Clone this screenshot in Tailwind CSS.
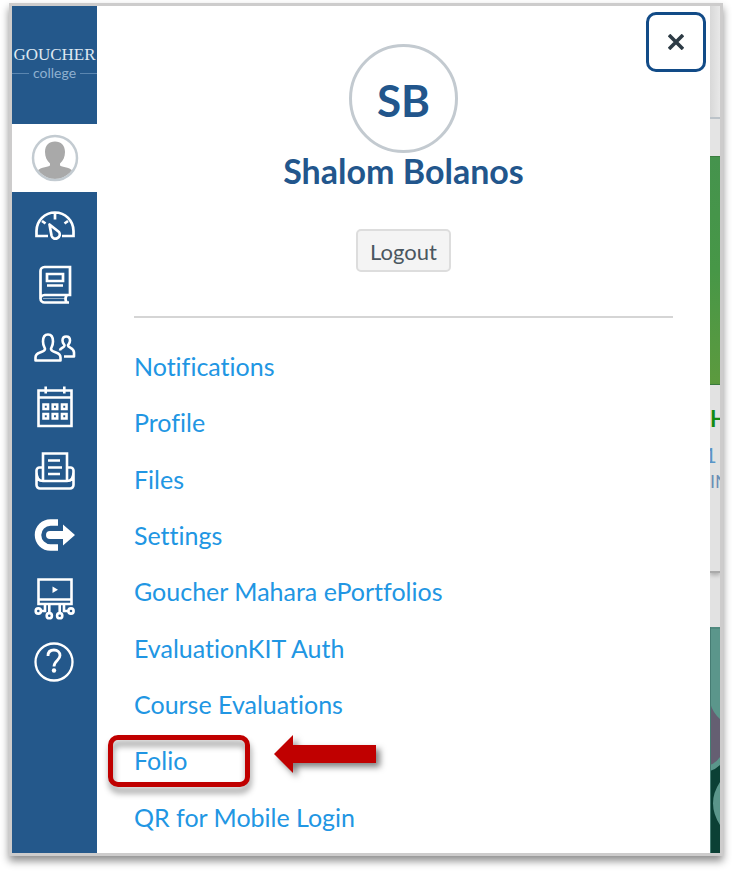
<!DOCTYPE html>
<html lang="en">
    <head>
        <meta charset="utf-8">
        <meta name="viewport" content="width=device-width, initial-scale=1">
        <title>Account</title>
        <script src="https://cdn.jsdelivr.net/npm/@tailwindcss/browser@4"></script>
    </head>
    <body class="flex min-h-screen bg-white px-[9px] pt-[3px] pb-4 font-['Lato',sans-serif]">

    <div class="flex flex-1 border-3 border-[#cdcccc] shadow-[0_5px_8px_rgba(0,0,0,0.45)]">

        <!-- Global navigation -->
        <nav class="flex w-[85px] shrink-0 flex-col bg-[#24588b] text-white">
            <a href="#" class="flex h-[118px] flex-col items-center justify-center overflow-hidden pb-1">
                <span class="font-['Liberation_Serif',serif] text-[17px] leading-5 text-[#dfe8f1]">GOUCHER</span>
                <span class="flex w-full items-center gap-1 text-sm leading-4 text-[#8fb0d0]">
                    <span class="h-px flex-1 bg-[#5b86b0]"></span>college<span class="h-px flex-1 bg-[#5b86b0]"></span>
                </span>
            </a>
            <a href="#" aria-label="Account" class="mb-[3px] flex h-[68px] items-center justify-center bg-white">
                <svg class="size-12" viewBox="0 0 48 48">
                    <clipPath id="face"><circle cx="24" cy="24" r="21"/></clipPath>
                    <g clip-path="url(#face)" fill="#a9a9a9">
                        <path d="M24 7.500c6 0 10 4 10 10.500 0 5-2 9-5 11.500v2c3 2.500 12 1 14 8v8H5v-8c2-7 11-5.500 14-8v-2c-3-2.500-5-6.500-5-11.500C14 11.500 18 7.500 24 7.500z"/>
                    </g>
                    <circle cx="24" cy="24" r="22" fill="none" stroke="#c3cbd1" stroke-width="2.500"/>
                </svg>
            </a>
            <a href="#" aria-label="Dashboard" class="flex h-[62px] justify-center">
                <svg class="h-[62px] w-[49px]" viewBox="0 0 49 62" fill="none" stroke="currentColor" stroke-width="2.700">
                    <path d="M18 41H6.500V36a18.500 18.500 0 0 1 37 0v5H32M25 18v6.500M12 26l3.500 2.500M38 26l-3.500 2.500"/>
                    <path d="M19.500 29.500l2 11c.7 3 3.500 4 6 2.500s3-4 1.500-6z" stroke-linejoin="round"/>
                </svg>
            </a>
            <a href="#" aria-label="Courses" class="flex h-[62px] justify-center">
                <svg class="h-[62px] w-[49px]" viewBox="0 0 49 62" fill="none" stroke="currentColor" stroke-width="2.700">
                    <path d="M39 45.500H14.500a4 4 0 0 1-4-4V14a4 4 0 0 1 4-4H40v28H14.500a4 4 0 0 0-4 4M37 38q-3 4 0 8"/>
                    <path d="M17 17h16v7H17zM17 28.500h16"/>
                    <path d="M13 41.500h23" stroke-width="1" opacity=".5"/>
                </svg>
            </a>
            <a href="#" aria-label="Groups" class="flex h-[62px] justify-center">
                <svg class="h-[62px] w-[49px]" viewBox="0 0 49 62" fill="none" stroke="currentColor" stroke-width="2.600" stroke-linejoin="round">
                    <path d="M5.500 41.500v-3c0-3 2-4.200 4.500-5 3-1 5-1.500 5-3.500 0-1.500-2-3-2-7.500 0-4.500 2-7 5-7s5 2.500 5 7c0 4.500-2 6-2 7.500 0 2 2 2.500 5 3.500 2.500.8 4.500 2 4.500 5v3z"/>
                    <path d="M30 31.500c0-3 4.500-2.500 4.500-5 0-1-2-2-2-5 0-2.700 1.500-4 3.700-4s3.800 1.300 3.800 4c0 3-2 4-2 5 0 2.500 6 2 6 7v4H34"/>
                </svg>
            </a>
            <a href="#" aria-label="Calendar" class="flex h-[62px] justify-center">
                <svg class="h-[62px] w-[49px]" viewBox="0 0 49 62" fill="none" stroke="currentColor" stroke-width="2.600">
                    <path d="M8.500 9.500h33v35.500h-33zM8.500 16.500h33M15.700 5.500v7M34.300 5.500v7"/>
                    <path d="M13.500 23.500h4.500v4.500h-4.500zM22.700 23.500h4.500v4.500h-4.500zM32 23.500h4.500v4.500h-4.500zM13.500 33h4.500v4.500h-4.500zM22.700 33h4.500v4.500h-4.500zM32 33h4.500v4.500h-4.500z"/>
                </svg>
            </a>
            <a href="#" aria-label="Inbox" class="flex h-[62px] justify-center">
                <svg class="h-[62px] w-[49px]" viewBox="0 0 49 62" fill="none" stroke="currentColor" stroke-width="2.600">
                    <path d="M13 38V10.500h24V38"/>
                    <path d="M13 24.500H9.500a3 3 0 0 0-3 3V42a3.500 3.500 0 0 0 3.500 3.500h30a3.500 3.500 0 0 0 3.500-3.500V27.500a3 3 0 0 0-3-3H37M6.500 29c0 6 2 9 6.500 9h24c4.500 0 6.500-3 6.500-9"/>
                    <path d="M18 17.500h12M18 24.500h14M18 31h12"/>
                </svg>
            </a>
            <a href="#" aria-label="Commons" class="flex h-[62px] justify-center">
                <svg class="h-[62px] w-[49px]" viewBox="0 0 49 62" fill="currentColor">
                    <path d="M28 17.500h-7.500a12.500 12.500 0 0 0 0 25H28" fill="none" stroke="currentColor" stroke-width="6.500"/>
                    <path d="M20 26h13v-6.500L45 30 33 40.500V34H20a4 4 0 0 1 0-8z"/>
                </svg>
            </a>
            <a href="#" aria-label="Studio" class="flex h-[62px] justify-center">
                <svg class="h-[62px] w-[49px]" viewBox="0 0 49 62" fill="none" stroke="currentColor" stroke-width="2.600">
                    <path d="M8.500 12.500h33V37h-33zM8.500 32.500h33M11 44h4v-7M19.300 46v-9M29.700 46v-9M38 44h-4v-7"/>
                    <circle cx="8.300" cy="44" r="2.600"/><circle cx="19.300" cy="48.700" r="2.600"/>
                    <circle cx="29.700" cy="48.700" r="2.600"/><circle cx="41" cy="44" r="2.600"/>
                    <path d="M22.500 19.500v6.500l5.500-3.200z" fill="currentColor" stroke="none"/>
                </svg>
            </a>
            <a href="#" aria-label="Help" class="flex h-[62px] justify-center">
                <svg class="h-[62px] w-[49px]" viewBox="0 0 49 62" fill="none" stroke="currentColor" stroke-width="2.300">
                    <circle cx="24" cy="33" r="18.500"/>
                    <path d="M18 27c0-4 2.500-6 6-6s6 2 6 5.500c0 5-6 5-6 11" stroke-width="2.800"/>
                    <circle cx="24" cy="41.500" r="2.200" fill="currentColor" stroke="none"/>
                </svg>
            </a>
        </nav>

        <!-- Account tray -->
        <main class="relative flex flex-1 flex-col bg-white px-[37px] pt-[38px] pb-2">
            <button type="button" aria-label="Close" class="absolute top-1.5 right-1 flex size-[60px] items-center justify-center rounded-[10px] border-3 border-[#124b87] bg-white text-[#2d3b45]">
                <svg class="size-4" viewBox="0 0 16 16" fill="none" stroke="currentColor" stroke-width="3.600"><path d="M1 1l14 14M15 1L1 15"/></svg>
            </button>

            <header class="flex flex-col items-center border-b-2 border-[#d5d5d5] pb-11 text-[#22568c]">
                <div class="flex size-[109px] items-center justify-center rounded-full border-3 border-[#c3cad0] pt-0.5 text-[44px] leading-none font-bold">SB</div>
                <h2 class="text-[34px] leading-9 font-bold">Shalom Bolanos</h2>
                <button type="button" class="mt-10 h-[43px] rounded-[5px] border-2 border-[#dddddd] bg-[#f4f4f4] px-3 pt-0.5 text-[22px] leading-none text-[#4a5760]">Logout</button>
            </header>

            <ul class="mt-5 flex flex-1 flex-col text-[25px] leading-8 text-[#2196e3] [font-variant-ligatures:none]">
                <li class="flex flex-1 items-center"><a href="#">Notifications</a></li>
                <li class="flex flex-1 items-center"><a href="#">Profile</a></li>
                <li class="flex flex-1 items-center"><a href="#">Files</a></li>
                <li class="flex flex-1 items-center"><a href="#">Settings</a></li>
                <li class="flex flex-1 items-center"><a href="#">Goucher Mahara ePortfolios</a></li>
                <li class="flex flex-1 items-center"><a href="#">EvaluationKIT Auth</a></li>
                <li class="flex flex-1 items-center"><a href="#">Course Evaluations</a></li>
                <li class="relative flex flex-1 items-center">
                    <a href="#">Folio</a>
                    <!-- highlight and pointer -->
                    <span class="absolute top-[3px] -left-[26px] h-[52px] w-[142px] rounded-[10px] border-[5px] border-[#c00000] drop-shadow-[1px_6px_3px_rgba(0,0,0,0.4)]"></span>
                    <svg class="absolute top-[3px] left-[140px] h-[38px] w-[102px] overflow-visible drop-shadow-[4px_4px_3px_rgba(0,0,0,0.5)]" viewBox="0 0 102 38" fill="#c00000"><path d="M0 19L19 0v10h83v18H19v10z"/></svg>
                </li>
                <li class="flex flex-1 items-center"><a href="#">QR for Mobile Login</a></li>
            </ul>
        </main>

        <!-- Dashboard showing behind the tray -->
        <aside class="flex w-2.5 shrink-0 flex-col overflow-hidden bg-[#e2e2e2]">
            <div class="h-[113px] border-b-2 border-[#bcc3c9] bg-linear-to-r from-[#d8d8d8] to-[#e8e8e8]"></div>
            <div class="h-[37px] bg-[#e4e4e4]"></div>
            <div class="h-[229px] border-y border-[#3b7d40] bg-linear-to-b from-[#45934d] via-[#479747] to-[#5c9a3e]"></div>
            <div class="flex h-[188px] flex-col border-b-2 border-[#aaaaaa] pt-5 shadow-[0_2px_4px_rgba(0,0,0,0.25)]">
                <span class="text-[22px] leading-7 font-bold text-[#138a13]">H</span>
                <span class="mt-2 -ml-1.5 text-[22px] leading-7 text-[#5995c8]">1</span>
                <span class="text-lg leading-6 text-[#6b8fb5]">IN</span>
            </div>
            <div class="h-[54px]"></div>
            <svg class="w-2.5 flex-1" viewBox="0 0 10 226" preserveAspectRatio="none">
                <path fill="#5b968b" d="M0 0h10v226H0z"/>
                <path fill="#655f72" d="M0 76q3 10 10 16v38q-4 6-10 8z"/>
                <path fill="#0b4035" d="M0 144q6-2 10-6v17q-14 21 0 43v28H0z"/>
                <path fill="none" stroke="#467c73" d="M0 1h10M.5 0v226"/>
            </svg>
        </aside>
    </div>

    </body>
</html>
